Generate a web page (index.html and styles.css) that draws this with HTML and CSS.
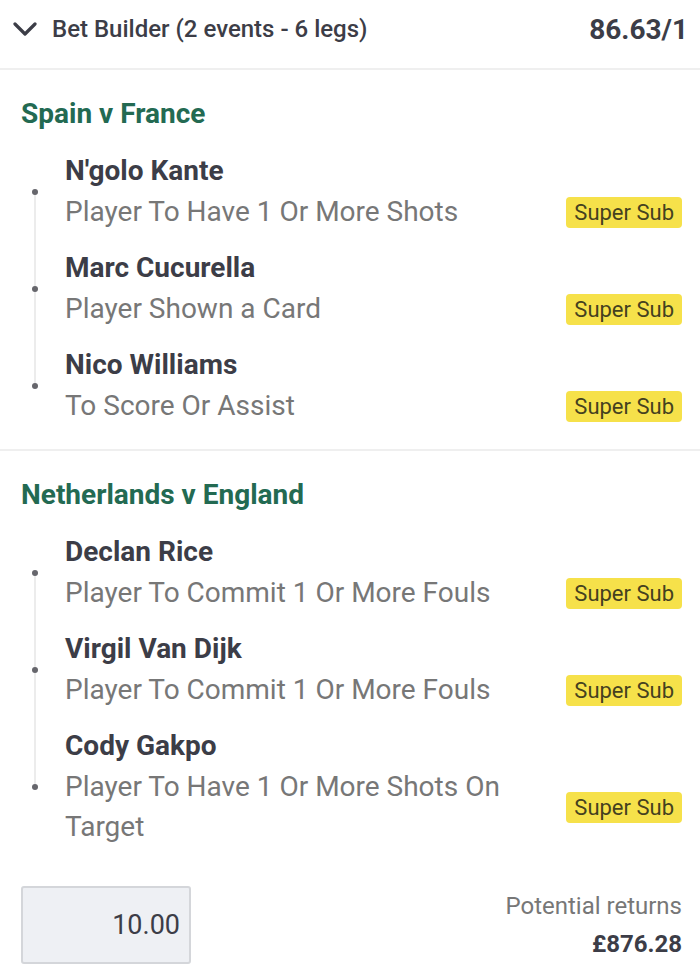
FILE: index.html
```html
<!DOCTYPE html>
<html lang="en">
<head>
  <meta charset="UTF-8" />
  <title>Bet Builder</title>
  <link rel="stylesheet" href="styles.css">
</head>
<body>

  <div class="bet-header">
    <svg class="chevron" width="24" height="16" viewBox="0 0 24 16">
      <path d="M2 3 L12 13 L22 3" fill="none" stroke="#3c3d47" stroke-width="3.2" stroke-linecap="round" stroke-linejoin="round"/>
    </svg>
    <span class="bet-title">Bet Builder (2 events - 6 legs)</span>
    <span class="bet-odds">86.63/1</span>
  </div>

  <div class="event">
    <h2 class="event-name">Spain v France</h2>
    <div class="legs">
      <div class="leg">
        <span class="dot"></span>
        <div class="leg-player">N'golo Kante</div>
        <div class="leg-row">
          <span class="leg-market">Player To Have 1 Or More Shots</span>
          <span class="badge">Super Sub</span>
        </div>
      </div>
      <div class="leg">
        <span class="dot"></span>
        <div class="leg-player">Marc Cucurella</div>
        <div class="leg-row">
          <span class="leg-market">Player Shown a Card</span>
          <span class="badge">Super Sub</span>
        </div>
      </div>
      <div class="leg">
        <span class="dot"></span>
        <div class="leg-player">Nico Williams</div>
        <div class="leg-row">
          <span class="leg-market">To Score Or Assist</span>
          <span class="badge">Super Sub</span>
        </div>
      </div>
    </div>
  </div>

  <div class="event">
    <h2 class="event-name">Netherlands v England</h2>
    <div class="legs">
      <div class="leg">
        <span class="dot"></span>
        <div class="leg-player">Declan Rice</div>
        <div class="leg-row">
          <span class="leg-market">Player To Commit 1 Or More Fouls</span>
          <span class="badge">Super Sub</span>
        </div>
      </div>
      <div class="leg">
        <span class="dot"></span>
        <div class="leg-player">Virgil Van Dijk</div>
        <div class="leg-row">
          <span class="leg-market">Player To Commit 1 Or More Fouls</span>
          <span class="badge">Super Sub</span>
        </div>
      </div>
      <div class="leg">
        <span class="dot"></span>
        <div class="leg-player">Cody Gakpo</div>
        <div class="leg-row">
          <span class="leg-market">Player To Have 1 Or More Shots On Target</span>
          <span class="badge">Super Sub</span>
        </div>
      </div>
    </div>
  </div>

  <div class="stake-row">
    <input class="stake" type="text" value="10.00">
    <div class="returns">
      <div class="returns-label">Potential returns</div>
      <div class="returns-value">£876.28</div>
    </div>
  </div>

</body>
</html>
```

FILE: styles.css
```css
body {
  margin: 0;
  font-family: Roboto, "Noto Sans", sans-serif;
  color: #3c3d47;
  background: #fff;
}
.bet-header {
  display: flex;
  align-items: center;
  height: 58px;
  padding: 0 12px 10px 13px;
  border-bottom: 2px solid #efefef;
}
.chevron {
  margin-right: 15px;
}
.bet-title {
  font-size: 24px;
  font-weight: 500;
  flex: 1;
}
.bet-odds {
  font-size: 28px;
  font-weight: 700;
}
.event {
  padding: 26px 18px 23px 21px;
}
.event + .event {
  border-top: 2px solid #efefef;
}
.event-name {
  margin: 0;
  font-size: 28px;
  line-height: 36px;
  font-weight: 700;
  color: #236a52;
}
.legs {
  margin-top: 19px;
  display: flex;
  flex-direction: column;
  gap: 16px;
}
.leg {
  position: relative;
  padding-left: 44px;
}
.dot {
  position: absolute;
  left: 11px;
  top: 50%;
  width: 6px;
  height: 6px;
  margin-top: -3px;
  border-radius: 50%;
  background: #66666c;
  z-index: 1;
}
/* rail: upper half joins previous leg, lower half runs into the gap */
.leg + .leg::before,
.leg:not(:last-child)::after {
  content: "";
  position: absolute;
  left: 13px;
  width: 2px;
  background: #ececec;
}
.leg + .leg::before {
  top: 0;
  bottom: 50%;
}
.leg:not(:last-child)::after {
  top: 50%;
  bottom: -16px;
}
.leg-player {
  font-size: 28px;
  line-height: 40px;
  font-weight: 700;
}
.leg-row {
  display: flex;
  align-items: center;
  justify-content: space-between;
  gap: 24px;
  margin-top: 1px;
}
.leg-market {
  font-size: 28px;
  line-height: 40px;
  color: #777;
}
.badge {
  flex-shrink: 0;
  background: #f6e14a;
  color: #45411f;
  font-size: 22px;
  line-height: 31px;
  padding: 0 8px;
  border-radius: 4px;
}
.stake-row {
  display: flex;
  justify-content: space-between;
  align-items: center;
  padding: 16px 18px 0 21px;
}
.stake {
  width: 170px;
  height: 78px;
  box-sizing: border-box;
  background: #eef0f4;
  border: 2px solid #d4d6da;
  border-radius: 3px;
  font-family: inherit;
  font-size: 27px;
  color: #3c3d47;
  text-align: right;
  padding: 0 9px;
}
.returns {
  text-align: right;
}
.returns-label {
  font-size: 24px;
  line-height: 38px;
  color: #777;
}
.returns-value {
  font-size: 24px;
  line-height: 38px;
  font-weight: 700;
}
```
